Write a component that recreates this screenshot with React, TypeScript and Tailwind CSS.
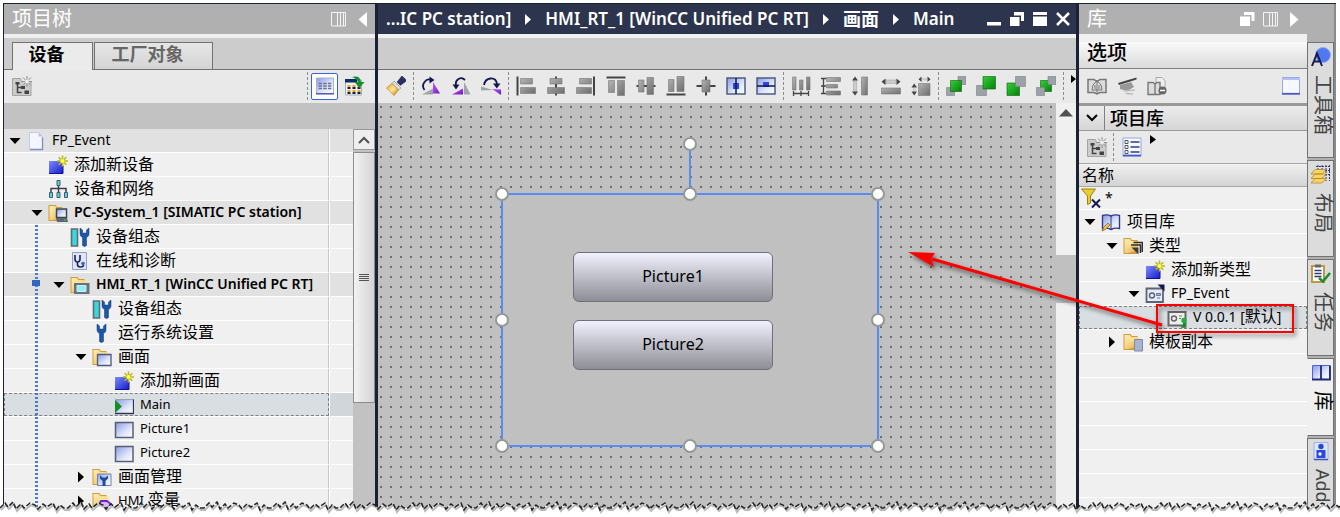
import type { ReactNode } from "react";

const LATIN = "font-['Noto_Sans','Noto_Sans_CJK_SC',sans-serif]";

/* Shared gradients for the toolbar and tree icons */
const IconDefs = () => (
  <svg className="absolute h-0 w-0" aria-hidden="true">
    <defs>
      <linearGradient id="gGrey" x1="0" y1="0" x2="1" y2="1">
        <stop offset="0" stopColor="#b4b4b4" />
        <stop offset="1" stopColor="#6e6e6e" />
      </linearGradient>
      <linearGradient id="gBlue" x1="0" y1="0" x2="1" y2="1">
        <stop offset="0" stopColor="#8b9be0" />
        <stop offset="0.6" stopColor="#dfe6fa" />
        <stop offset="1" stopColor="#ffffff" />
      </linearGradient>
      <linearGradient id="gNew" x1="0" y1="0" x2="1" y2="1">
        <stop offset="0" stopColor="#7c8cff" />
        <stop offset="1" stopColor="#1418c8" />
      </linearGradient>
      <linearGradient id="gGreen" x1="0" y1="0" x2="1" y2="1">
        <stop offset="0" stopColor="#35d035" />
        <stop offset="1" stopColor="#04800c" />
      </linearGradient>
      <linearGradient id="gFolder" x1="0" y1="0" x2="1" y2="1">
        <stop offset="0" stopColor="#fff0b8" />
        <stop offset="1" stopColor="#e8b64c" />
      </linearGradient>
      <linearGradient id="gGold" x1="0" y1="0" x2="1" y2="1">
        <stop offset="0" stopColor="#f0a020" />
        <stop offset="0.5" stopColor="#ffe890" />
        <stop offset="1" stopColor="#c87008" />
      </linearGradient>
      <linearGradient id="gPurple" x1="0" y1="0" x2="1" y2="1">
        <stop offset="0" stopColor="#c060f8" />
        <stop offset="1" stopColor="#7010d0" />
      </linearGradient>
    </defs>
  </svg>
);

const Svg = ({ children }: { children: ReactNode }) => (
  <svg width="20" height="20" viewBox="0 0 20 20" className="shrink-0" aria-hidden="true">
    {children}
  </svg>
);

/* ---------- tree icons ---------- */

const Folder = () => (
  <>
    <path d="M0.500 2h7l1.500 2h5.500v14H0.500z" fill="#d09c38" />
    <path d="M1.500 3h5.500l1.500 2h5.500v10L5 17H1.500z" fill="url(#gFolder)" />
    <path d="M5 5.500h13v4H6z" fill="#fbe6a4" opacity="0.700" />
  </>
);

const Wrench = () => (
  <path
    d="M1 1v6q0 2.500 2.500 3.500v8q2 2 4 0v-8q2.500-1 2.500-3.500V1L7.500 3v3h-4V3z"
    fill="#1c56a4"
    stroke="#123a78"
    strokeWidth="0.500"
  />
);

const Star = () => (
  <path
    d="M14.500 0.500v11M9 6h11M10.700 2.200l7.600 7.600M18.300 2.200l-7.600 7.600"
    stroke="#b8b818"
    strokeWidth="1.600"
  />
);

const icons: Record<string, ReactNode> = {
  page: (
    <>
      <path d="M3.500 1.500h9l4 4v13h-13z" fill="#f4f7ff" stroke="#c0caea" />
      <path d="M4 18.500h12.500v-12" stroke="#7d8cc8" strokeWidth="1.300" fill="none" />
      <path d="M12.500 1.500v4h4z" fill="#b8c4ec" />
    </>
  ),
  add: (
    <>
      <path d="M1 6h14v13H1z" fill="url(#gNew)" />
      <path d="M1 18.500h14v-8" stroke="#10109c" fill="none" />
      <Star />
      <circle cx="14.500" cy="6" r="2" fill="#ffff50" />
    </>
  ),
  network: (
    <>
      <path d="M3 13V9.500h15V13M10.500 6v7" stroke="#39404c" strokeWidth="1.500" fill="none" />
      <g fill="#50d8dc" stroke="#4a5868">
        <path d="M9 1.500h3v5H9zM1.500 13.500h3v5h-3zM9 13.500h3v5H9zM16.500 13.500h3v5h-3z" />
      </g>
    </>
  ),
  pc: (
    <>
      <Folder />
      <path d="M8.500 6h10v8.500h-10z" fill="url(#gBlue)" stroke="#3a4654" strokeWidth="1.500" />
      <path d="M8 15h11l1 4H9z" fill="#5a6674" />
      <path d="M16 17h2" stroke="#30d040" />
    </>
  ),
  config: (
    <>
      <path d="M1.500 2h6v17h-6z" fill="#38d8dc" stroke="#606c74" strokeWidth="1.600" />
      <g transform="translate(9 0)">
        <Wrench />
      </g>
    </>
  ),
  diag: (
    <>
      <path d="M2.500 1.500h14v17h-14z" fill="#dfe5fb" stroke="#8e9cd0" />
      <path d="M5 4v4q0 3 2.500 3T10 8V4M7.500 11v2.500q0 2.500 3 2.500t3-2" stroke="#1c2454" strokeWidth="1.600" fill="none" />
      <circle cx="13" cy="12.500" r="1.800" fill="#3c68b8" />
    </>
  ),
  hmi: (
    <>
      <Folder />
      <path d="M4 8h15.500v11H4z" fill="#627482" />
      <path d="M7 10.500h9v6H7z" fill="#8cf0f4" stroke="#dfe8ee" />
    </>
  ),
  wrench: (
    <g transform="translate(4 0)">
      <Wrench />
    </g>
  ),
  screens: (
    <>
      <Folder />
      <path d="M5.500 7.500h13.500v11H5.500z" fill="url(#gBlue)" stroke="#4c5878" strokeWidth="1.300" />
    </>
  ),
  main: (
    <>
      <path d="M1.500 4.500h18v14h-18z" fill="url(#gBlue)" stroke="#98a2b8" />
      <path d="M1 18.500h18.500v-14" stroke="#303850" strokeWidth="1.300" fill="none" />
      <path d="M1 5l7 6.500L1 18z" fill="#178c24" />
    </>
  ),
  picture: <path d="M1.500 3.500h17.500v15H1.500z" fill="url(#gBlue)" stroke="#555f75" strokeWidth="1.500" />,
  manage: (
    <>
      <Folder />
      <path d="M5.500 7h13.500v11.500H5.500z" fill="url(#gBlue)" stroke="#7080b0" />
      <path d="M8 8.500v3l2.500 2.500v5h3V14l2.500-2.500v-3l-2.500 2h-3z" fill="#1c4c9c" />
    </>
  ),
  tags: (
    <>
      <Folder />
      <path d="M5 17l4-7h6l4 3-3 4H5z" fill="#d8b8f8" stroke="#6a28b8" strokeWidth="1.800" />
    </>
  ),
  library: (
    <>
      <path d="M1.500 3.500Q6 2 10 4q4-2 8.500-.5v13Q14 15.500 10 17.500q-4-2-8.500-1z" fill="url(#gBlue)" stroke="#323c88" strokeWidth="1.400" />
      <path d="M10 4v13.500" stroke="#323c88" />
      <path d="M1 19l1.500-3.500L7 11l2 2-4.500 4.500z" fill="#f0c050" stroke="#7c5418" strokeWidth="0.700" />
    </>
  ),
  types: (
    <>
      <Folder />
      <path d="M8 9h9.500v8M10.500 6.500H19.500V16" stroke="#2c2c2c" strokeWidth="1.600" fill="none" />
      <path d="M8.500 11.500h7v7z" fill="#3c3c3c" />
    </>
  ),
  faceplate: (
    <>
      <path d="M1.500 4.500h16.500v13.500H1.500z" fill="#e8ebf4" stroke="#5c6478" strokeWidth="1.800" />
      <circle cx="7" cy="11.500" r="2.500" fill="none" stroke="#5c6478" strokeWidth="1.400" />
      <path d="M11.500 9.500h4v2h-4zM12 14h3" stroke="#6878a0" fill="#a0b0d8" />
      <path d="M12.500 0.500h7v7z" fill="#14184c" />
    </>
  ),
  version: (
    <>
      <path d="M1.500 4h17v13.500h-17z" fill="#eeeeee" stroke="#666666" strokeWidth="2" />
      <circle cx="7" cy="10.500" r="2.500" fill="none" stroke="#666666" strokeWidth="1.400" />
      <path d="M12 8h3M12 10.500h2" stroke="#777777" />
      <path d="M17 13v6" stroke="#108828" strokeWidth="2" />
      <circle cx="17" cy="12.500" r="2.700" fill="#22b03c" />
      <path d="M14 19h5.500" stroke="#108828" strokeWidth="1.500" />
    </>
  ),
  copies: (
    <>
      <Folder />
      <path d="M11.500 7.500h8v11.500h-8z" fill="#aab4d0" stroke="#7c88a8" />
    </>
  ),
};

/* ---------- trees ---------- */

type TreeItem = {
  label: ReactNode;
  icon: string;
  level: number;
  state?: "open" | "closed";
  bold?: boolean;
  shaded?: boolean;
  selected?: boolean;
  guide?: boolean;
  marker?: boolean;
  wide?: boolean;
};

const indents = ["", "pl-[22px]", "pl-[44px]", "pl-[66px]", "pl-[88px]"];

const projectItems: TreeItem[] = [
  { label: "FP_Event", icon: "page", level: 0, state: "open", shaded: true, wide: true },
  { label: "添加新设备", icon: "add", level: 1 },
  { label: "设备和网络", icon: "network", level: 1 },
  { label: "PC-System_1 [SIMATIC PC station]", icon: "pc", level: 1, state: "open", shaded: true, bold: true, wide: true },
  { label: "设备组态", icon: "config", level: 2, guide: true },
  { label: "在线和诊断", icon: "diag", level: 2, guide: true },
  { label: "HMI_RT_1 [WinCC Unified PC RT]", icon: "hmi", level: 2, state: "open", shaded: true, bold: true, wide: true, guide: true, marker: true },
  { label: "设备组态", icon: "config", level: 3, guide: true },
  { label: "运行系统设置", icon: "wrench", level: 3, guide: true },
  { label: "画面", icon: "screens", level: 3, state: "open", guide: true },
  { label: "添加新画面", icon: "add", level: 4, guide: true },
  { label: "Main", icon: "main", level: 4, selected: true, guide: true },
  { label: "Picture1", icon: "picture", level: 4, guide: true },
  { label: "Picture2", icon: "picture", level: 4, guide: true },
  { label: "画面管理", icon: "manage", level: 3, state: "closed", guide: true },
  {
    label: (
      <>
        <span className="text-[13px]">HMI</span> 变量
      </>
    ),
    icon: "tags",
    level: 3,
    state: "closed",
    guide: true,
  },
];

const libraryItems: TreeItem[] = [
  { label: "项目库", icon: "library", level: 0, state: "open" },
  { label: "类型", icon: "types", level: 1, state: "open" },
  { label: "添加新类型", icon: "add", level: 2 },
  { label: "FP_Event", icon: "faceplate", level: 2, state: "open", wide: true },
  {
    label: (
      <>
        <span className="text-sm">V 0.0.1 [</span>默认<span className="text-sm">]</span>
      </>
    ),
    icon: "version",
    level: 3,
    selected: true,
  },
  { label: "模板副本", icon: "copies", level: 1, state: "closed" },
];

const isLatin = (label: ReactNode) => typeof label === "string" && /^[\x20-\x7e]+$/.test(label);

const Expander = ({ state }: { state?: "open" | "closed" }) => (
  <svg width="12" height="12" viewBox="0 0 12 12" className="shrink-0" aria-hidden="true">
    {state === "open" && <path d="M0.500 3h11L6 9z" fill="#000" />}
    {state === "closed" && <path d="M3 0.500v11L9 6z" fill="#000" />}
  </svg>
);

const TreeRow = ({ item, className }: { item: TreeItem; className: string }) => {
  const size = isLatin(item.label) ? (item.wide ? "text-sm" : "text-[13px]") : "text-base";
  const background = item.selected
    ? "bg-[#d9dee2] outline-1 -outline-offset-1 outline-dashed outline-[#808080]"
    : item.shaded
      ? "bg-[#e1e1e1]"
      : "bg-[#f0f0f0]";
  return (
    <div
      role="treeitem"
      aria-expanded={item.state ? item.state === "open" : undefined}
      aria-selected={!!item.selected}
      className={`relative flex h-[23px] min-w-0 flex-1 items-center ${className} ${background}`}
    >
      {item.guide && (
        <span className="absolute top-0 left-[31px] h-[23px] w-[3px] bg-[repeating-linear-gradient(to_bottom,#4a7cc8_0_2px,transparent_2px_4px)]" />
      )}
      {item.marker && <span className="absolute top-[7px] left-7 h-[6px] w-2 bg-[#3068c0]" />}
      <div className={`flex items-center whitespace-nowrap ${indents[item.level]}`}>
        <Expander state={item.state} />
        <span className="mr-[6px] ml-[5px]">
          <Svg>{icons[item.icon]}</Svg>
        </span>
        <span className={`pb-[2px] leading-5 ${size} ${item.bold ? "font-semibold" : ""}`}>{item.label}</span>
      </div>
    </div>
  );
};

/* ---------- toolbar icons ---------- */

const grey = { fill: "url(#gGrey)", stroke: "#777777", strokeWidth: 0.6 };

const rotateIcons: [string, ReactNode][] = [
  [
    "向右旋转",
    <>
      <path d="M12 17.500V6l7 11.500z" fill="url(#gPurple)" />
      <path d="M1 18.500l11-6v6z" fill="#a0a4a8" />
      <path d="M3.500 14Q0.500 10 3.500 6T10 4" stroke="#14184c" strokeWidth="1.800" fill="none" />
      <path d="M8.500 0.500l5 3.500-5 3.500z" fill="#14184c" />
    </>,
  ],
  [
    "向左旋转",
    <>
      <path d="M1 18.500l11-6v6z" fill="url(#gPurple)" />
      <path d="M13 18.500V6l6.500 12.500z" fill="#a0a4a8" />
      <path d="M14 4Q11 1 7.500 3T5 10" stroke="#14184c" strokeWidth="1.800" fill="none" />
      <path d="M1.500 8.500h7L5 13.500z" fill="#14184c" />
    </>,
  ],
  [
    "翻转",
    <>
      <path d="M11 13l9 0.500v5.500z" fill="url(#gPurple)" />
      <path d="M0 10.500v4l12-.5z" fill="#a0a4a8" />
      <path d="M3 9Q4 3 9.500 2.500T16 8" stroke="#14184c" strokeWidth="1.800" fill="none" />
      <path d="M12 7.500h7.500l-3.700 5z" fill="#14184c" />
    </>,
  ],
];

const alignIcons: [string, ReactNode][] = [
  [
    "左对齐",
    <>
      <path d="M1.500 0.500v19" stroke="#444" strokeWidth="2" />
      <path d="M4.500 2.500h12v5.500h-12zM4.500 11.500h15v6h-15z" {...grey} />
    </>,
  ],
  [
    "水平居中",
    <>
      <path d="M10 0.500v19" stroke="#444" strokeWidth="2" />
      <path d="M4 2.500h12v5.500H4zM1.500 11.500h17v6h-17z" {...grey} />
    </>,
  ],
  [
    "右对齐",
    <>
      <path d="M18 0.500v19" stroke="#444" strokeWidth="2" />
      <path d="M3.500 2.500h12v5.500h-12zM0.500 11.500h15v6h-15z" {...grey} />
    </>,
  ],
  [
    "顶部对齐",
    <>
      <path d="M0.500 1.500h19" stroke="#444" strokeWidth="2" />
      <path d="M2.500 4.500h6v12h-6zM11.500 4.500h7v15h-7z" {...grey} />
    </>,
  ],
  [
    "垂直居中",
    <>
      <path d="M0.500 10h19" stroke="#444" strokeWidth="2" />
      <path d="M2.500 4h5.500v12H2.500zM11 1.500h6.500v17H11z" {...grey} />
    </>,
  ],
  [
    "底部对齐",
    <>
      <path d="M0.500 18.500h19" stroke="#444" strokeWidth="2" />
      <path d="M2.500 3.500h5.500v12H2.500zM11 0.500h7v15h-7z" {...grey} />
    </>,
  ],
  [
    "居中对齐",
    <>
      <path d="M0.500 10h19M10 0.500v19" stroke="#444" strokeWidth="2" />
      <path d="M6 4h8v12H6z" {...grey} />
    </>,
  ],
  [
    "在画面中水平居中",
    <>
      <path d="M1 2h18v16H1z" fill="url(#gBlue)" stroke="#4c5c84" strokeWidth="1.500" />
      <path d="M7 7h6v6H7z" fill="#2848e8" />
      <path d="M10 2v16" stroke="#101840" strokeWidth="1.500" />
    </>,
  ],
  [
    "在画面中垂直居中",
    <>
      <path d="M1 2h18v16H1z" fill="url(#gBlue)" stroke="#4c5c84" strokeWidth="1.500" />
      <path d="M7 6h6v5H7z" fill="#2848e8" />
      <path d="M1 10h18" stroke="#101840" strokeWidth="1.500" />
    </>,
  ],
];

const spaceIcons: [string, ReactNode][] = [
  [
    "水平等距",
    <>
      <path d="M1.500 1h3.500v13H1.500zM8.500 4h3.500v10H8.500zM15.500 1h3.500v13h-3.500z" {...grey} />
      <path d="M2 17.500h16M2.500 15v5M10 15v5M17.500 15v5" stroke="#444" strokeWidth="1.300" />
    </>,
  ],
  [
    "垂直等距",
    <>
      <path d="M5.500 1.500h14v4h-14zM5.500 8.500h11v3.500h-11zM5.500 15h14v4h-14z" {...grey} />
      <path d="M2.500 2v16M0 2.500h5M0 10h5M0 17.500h5" stroke="#444" strokeWidth="1.300" />
    </>,
  ],
  [
    "相同高度",
    <>
      <path d="M10.500 1h6v18h-6z" {...grey} />
      <path d="M2.500 5h3v10h-3z" fill="#ccc" stroke="#999" strokeWidth="0.500" />
      <path d="M1 4.500L4 0.500l3 4zM1 15.500l3 4 3-4z" fill="#444" />
    </>,
  ],
  [
    "相同宽度",
    <>
      <path d="M0.500 12h19v6H0.500z" {...grey} />
      <path d="M5 4h10v3.500H5z" fill="#ccc" stroke="#999" strokeWidth="0.500" />
      <path d="M4.500 2.500v6.500L0.500 5.700zM15.500 2.500v6.500l4-3.300z" fill="#444" />
    </>,
  ],
  [
    "相同大小",
    <>
      <path d="M7.500 7.500h11.500v12H7.500z" {...grey} />
      <path d="M10.500 0.500v5.500L7.500 3.200zM16.500 0.500v5.500l3-2.800zM0.500 11.500h5.500l-2.800-4zM0.500 15.500h5.500l-2.800 4z" fill="#444" />
      <path d="M11 2h5v2.500h-5zM2 12h2.500v3H2z" fill="#ccc" />
    </>,
  ],
];

const greyBox = { fill: "#9ca2a8", stroke: "#7c8288", strokeWidth: 0.6 };
const greenBox = { fill: "url(#gGreen)", stroke: "#08600c", strokeWidth: 0.6 };

const layerIcons: [string, ReactNode][] = [
  [
    "上移一层",
    <>
      <path d="M12 0.500h8v8h-8zM0.500 11.500h8v8h-8z" {...greyBox} />
      <path d="M4.500 4.500h11v11h-11z" {...greenBox} />
    </>,
  ],
  [
    "置于顶层",
    <>
      <path d="M0.500 9.500h10v10H0.500z" {...greyBox} />
      <path d="M7 0.500h12.500V13H7z" {...greenBox} />
    </>,
  ],
  [
    "置于底层",
    <>
      <path d="M1 7h12.500v12.500H1z" {...greenBox} />
      <path d="M9.500 0.500h10v10h-10z" {...greyBox} />
    </>,
  ],
  [
    "下移一层",
    <>
      <path d="M4.500 4.500h11v11h-11z" {...greenBox} />
      <path d="M12 0.500h8v8h-8zM0.500 11.500h8v8h-8z" {...greyBox} />
    </>,
  ],
];

const ToolGroup = ({ tools }: { tools: [string, ReactNode][] }) => (
  <div className="flex">
    {tools.map(([name, icon]) => (
      <button key={name} type="button" aria-label={name} className="flex h-7 w-[30px] items-center justify-center">
        <Svg>{icon}</Svg>
      </button>
    ))}
  </div>
);

const Separator = () => <div className="mx-[2px] h-7 border-l border-dashed border-[#8c8c8c]" />;

const newFolderIcon = (
  <>
    <path d="M0.500 2.500h8l1 3h9.500v14H0.500z" fill="#cccccc" stroke="#a4a4a4" />
    <path d="M5.500 8v8.500h4M5.500 11.500h4" stroke="#444" strokeWidth="1.500" fill="none" />
    <path d="M3.500 6h4v2.500h-4zM9 10h4v3H9zM12.500 14.500h4.500v3.500h-4.500z" fill="#444" />
    <path d="M15 0v11M9.500 5.500H20M11 1.500l8 8M19 1.500l-8 8" stroke="#909090" />
    <circle cx="15" cy="5.500" r="2" fill="#eee" />
  </>
);

const columnsIcon = (
  <svg width="15" height="15" viewBox="0 0 15 15" aria-hidden="true">
    <path d="M0.500 0.500h14v13.500H0.500zM6.500 0v14M9.500 0v14M12.500 0v14" fill="none" stroke="#f4f4f4" />
  </svg>
);

/* ---------- panels ---------- */

const ProjectTree = () => (
  <aside className="flex w-[371px] shrink-0 flex-col bg-[#c2c2c2]">
    <header className="flex h-[30px] shrink-0 items-center gap-3 bg-[#b0b0b0] pr-2 pl-2">
      <h2 className="flex-1 text-xl leading-[30px] text-white">项目树</h2>
      <button type="button" aria-label="列">
        {columnsIcon}
      </button>
      <button type="button" aria-label="折叠">
        <svg width="9" height="15" viewBox="0 0 9 15">
          <path d="M9 0v15L0.500 7.500z" fill="#fff" />
        </svg>
      </button>
    </header>
    <div className="h-1 shrink-0 bg-[#f0f0f0]" />
    <div role="tablist" className="flex h-8 shrink-0 gap-px border-b border-[#727272] bg-[#cccccc] pt-1 pl-2">
      <button
        role="tab"
        type="button"
        aria-selected="true"
        className="-mb-px w-[81px] border border-b-0 border-[#727272] bg-[#ebebeb] pr-3 pb-[6px] text-lg leading-5 font-bold"
      >
        设备
      </button>
      <button
        role="tab"
        type="button"
        aria-selected="false"
        className="w-[119px] border border-b-0 border-[#727272] bg-linear-to-b from-[#e6e6e6] to-[#d4d4d4] pr-3 pb-[5px] text-lg leading-5 font-bold text-[#666]"
      >
        工厂对象
      </button>
    </div>
    <div className="flex h-[33px] shrink-0 items-center bg-[#e9e9e9] pr-2 pb-px pl-2">
      <button type="button" aria-label="新建组" className="mr-auto">
        <Svg>{newFolderIcon}</Svg>
      </button>
      <Separator />
      <button
        type="button"
        aria-label="列表视图"
        className="ml-px flex h-[27px] w-[27px] items-center justify-center rounded-xs border border-[#3a64d0] bg-white"
      >
        <Svg>
          <path d="M1.500 2h17v15.500h-17z" fill="url(#gBlue)" stroke="#a8b0d8" />
          <path d="M1 17.800h18" stroke="#5058c0" strokeWidth="1.500" />
          <path d="M3.500 7.500h13M3.500 10h13M3.500 12.500h13" stroke="#6a7490" strokeWidth="1.400" strokeDasharray="3.500 1.200" />
        </Svg>
      </button>
      <button type="button" aria-label="导出" className="ml-1 pr-[2px] pl-[3px]">
        <Svg>
          <path d="M0.500 4h16v15h-16z" fill="#f2f0e4" stroke="#9cb0c0" />
          <path d="M0 3h12v3.500H0z" fill="#0c2c6c" />
          <path d="M2.500 10h13M2.500 15h13" stroke="#e0a840" strokeWidth="2" strokeDasharray="3 2" />
          <path d="M2.500 12h13M2.500 17h13" stroke="#1c1c3c" strokeWidth="2" strokeDasharray="3 2" />
          <path d="M7 1q8-2 9 5h3.500L14.500 12 9.500 6h3.500q-1-3-6-5z" fill="#189030" />
        </Svg>
      </button>
    </div>
    <div className="mt-[26px] flex min-h-0 flex-1">
      <div role="tree" aria-label="项目树" className="flex-1 overflow-hidden bg-[#f0f0f0]">
        {projectItems.map((item, i) => (
          <div key={i} className="flex border-b border-white">
            <TreeRow item={item} className="border-r border-[#c8c8c8] pl-[5px]" />
            <div
              className={`h-[23px] w-6 border-l border-white ${
                item.selected ? "bg-[#d1d6da]" : item.shaded ? "bg-[#e1e1e1]" : "bg-[#f0f0f0]"
              }`}
            />
          </div>
        ))}
      </div>
      <div className="flex w-[22px] shrink-0 flex-col gap-[2px]">
        <button
          type="button"
          aria-label="向上滚动"
          className="flex h-[21px] w-full items-center justify-center border border-[#9a9a9a] bg-[#eeeeee]"
        >
          <svg width="12" height="8" viewBox="0 0 12 8">
            <path d="M1 7l5-5 5 5" fill="none" stroke="#505050" strokeWidth="2" />
          </svg>
        </button>
        <div className="flex h-[251px] flex-col items-center justify-center gap-px border border-[#8c8c8c] bg-linear-to-r from-[#f2f2f2] to-[#d4d4d4]">
          <span className="h-px w-[10px] bg-[#555]" />
          <span className="h-px w-[10px] bg-[#555]" />
          <span className="h-px w-[10px] bg-[#555]" />
          <span className="h-px w-[10px] bg-[#555]" />
        </div>
      </div>
    </div>
  </aside>
);

const Crumb = () => (
  <svg width="6" height="11" viewBox="0 0 6 11" aria-hidden="true">
    <path d="M0 0v11l6-5.500z" fill="#fff" />
  </svg>
);

const windowIcons: [string, ReactNode][] = [
  ["最小化", <path d="M0 10h14v3.500H0z" fill="#fff" />],
  [
    "还原",
    <>
      <path d="M4 0h10v9h-3V3.500H4z" fill="#fff" />
      <path d="M0 5h9.500v9H0z" fill="#fff" />
    </>,
  ],
  ["最大化", <path d="M0 0h14v3H0zM0 4.500h14V14H0z" fill="#fff" />],
  ["关闭", <path d="M1 1l12 12M13 1L1 13" stroke="#fff" strokeWidth="2.500" />],
];

const handles = [
  "left-[-8px] top-[-8px]",
  "left-[180px] top-[-8px]",
  "right-[-8px] top-[-8px]",
  "left-[-8px] top-[118px]",
  "right-[-8px] top-[118px]",
  "left-[-8px] bottom-[-8px]",
  "left-[180px] bottom-[-8px]",
  "right-[-8px] bottom-[-8px]",
  "left-[180px] top-[-58px]",
];

const Editor = () => (
  <main className="flex min-w-0 flex-1 flex-col border-x-[3px] border-[#1b2135]">
    <header className="flex h-[30px] shrink-0 items-center bg-[#2d344d] pr-[6px] pl-2 text-[17px] leading-[30px] font-semibold text-white">
      <nav aria-label="路径" className="flex flex-1 items-center gap-[14px] whitespace-nowrap">
        <span>...IC PC station]</span>
        <Crumb />
        <span>HMI_RT_1 [WinCC Unified PC RT]</span>
        <Crumb />
        <span className="text-lg leading-[30px]">画面</span>
        <Crumb />
        <span>Main</span>
      </nav>
      <div className="flex gap-[9px]">
        {windowIcons.map(([name, icon]) => (
          <button key={name} type="button" aria-label={name}>
            <svg width="14" height="14" viewBox="0 0 14 14">
              {icon}
            </svg>
          </button>
        ))}
      </div>
    </header>
    <div className="h-1 shrink-0 bg-[#f0f0f0]" />
    <div className="h-8 shrink-0 border-b border-[#727272] bg-[#cccccc]" />
    <div role="toolbar" aria-label="编辑" className="flex h-[33px] shrink-0 items-center overflow-hidden bg-[#e9e9e9] pb-px pl-[3px]">
      <ToolGroup
        tools={[
          [
            "格式刷",
            <>
              <path d="M12 6l4-5 3.500 3.500-5 4z" fill="#2c3060" stroke="#2c3060" strokeWidth="2" />
              <path d="M8 5l7 7-2.500 2L6 7.500z" fill="#dcdcdc" stroke="#777" strokeWidth="0.500" />
              <path d="M6 7.500l6.500 6.500L8 19.500 0.500 12z" fill="url(#gGold)" stroke="#a06010" strokeWidth="0.500" />
            </>,
          ],
        ]}
      />
      <Separator />
      <ToolGroup tools={rotateIcons} />
      <Separator />
      <ToolGroup tools={alignIcons} />
      <Separator />
      <ToolGroup tools={spaceIcons} />
      <Separator />
      <ToolGroup tools={layerIcons} />
      <Separator />
      <button type="button" aria-label="更多" className="ml-auto self-start pt-[5px]">
        <svg width="5" height="8" viewBox="0 0 5 8">
          <path d="M0 0v8l5-4z" fill="#000" />
        </svg>
      </button>
    </div>
    <div className="flex min-h-0 flex-1">
      <div className="relative flex-1 overflow-hidden bg-[#c0c0c0] bg-[radial-gradient(circle_at_3px_4px,#6e6e6e_0_1px,transparent_1px)] bg-size-[10px_10px]">
        <div className="absolute top-[90px] left-[123px] flex h-[254px] w-[378px] flex-col gap-[18px] border-2 border-[#5a8df0] bg-[#c0c0c0] pt-[57px] pl-[70px]">
          {["Picture1", "Picture2"].map((name) => (
            <button
              key={name}
              type="button"
              className="h-[50px] w-[200px] shrink-0 rounded-md border border-[#707078] bg-linear-to-b from-[#f2f2ff] to-[#8e8e96] pb-[2px] text-base"
            >
              {name}
            </button>
          ))}
          <span className="absolute top-[-46px] left-[186px] h-11 w-[2px] bg-[#5a8df0]" />
          {handles.map((pos) => (
            <span key={pos} className={`absolute size-[14px] rounded-full border-2 border-[#979797] bg-white ${pos}`} />
          ))}
        </div>
      </div>
      <div className="flex w-5 shrink-0 flex-col items-center bg-[#f0f0f0]">
        <svg width="14" height="8" viewBox="0 0 14 8" className="mt-[6px] shrink-0" aria-hidden="true">
          <path d="M0 7.500h14L7 0z" fill="#505050" />
        </svg>
        <div className="mt-[138px] h-12 w-full shrink-0 bg-[#c0c0c0]" />
      </div>
    </div>
  </main>
);

const Library = () => (
  <aside className="flex w-[228px] shrink-0 flex-col bg-[#f0f0f0]">
    <header className="flex h-[30px] shrink-0 items-center gap-2 bg-[#b0b0b0] pr-2 pl-2">
      <h2 className="flex-1 text-xl leading-[30px] text-white">库</h2>
      <button type="button" aria-label="浮动">
        <svg width="15" height="14" viewBox="0 0 15 14">
          <path d="M4 0h10.500v9h-3V3H4zM0 4.500h10V14H0z" fill="#fff" />
        </svg>
      </button>
      <button type="button" aria-label="列">
        {columnsIcon}
      </button>
      <button type="button" aria-label="展开" className="ml-1">
        <svg width="9" height="15" viewBox="0 0 9 15">
          <path d="M0 0v15l8.500-7.500z" fill="#fff" />
        </svg>
      </button>
    </header>
    <h3 className="mt-2 h-[27px] shrink-0 border-b border-[#808080] bg-linear-to-b from-[#fafafa] to-[#dadada] pl-2 text-xl leading-[22px] font-medium">
      选项
    </h3>
    <div className="flex h-[34px] shrink-0 items-center gap-[10px] bg-[#e9e9e9] pr-[6px] pl-2">
      <button type="button" aria-label="打开库">
        <Svg>
          <path d="M1 3.500h6l3 2 3-2h6v13h-6l-3 1.500-3-1.500H1z" fill="#dcdcdc" stroke="#777" strokeWidth="1.500" />
          <path d="M10 4.500L6 9l-1 5h10l-1-5zM10 4v13M8 9v4M12 9v4" stroke="#777" fill="none" />
        </Svg>
      </button>
      <button type="button" aria-label="清理库">
        <Svg>
          <path d="M1 7L19.500 1.500v2L2 9z" fill="#444" />
          <path d="M3 9l11-3 3 5-7 4-7-2z" fill="#999" />
          <path d="M7 15l11-1M9 17.500l7 .5" stroke="#bbb" strokeWidth="1.500" />
        </Svg>
      </button>
      <button type="button" aria-label="更新库" className="mr-auto">
        <Svg>
          <path d="M9 1.500h6l3 3v9H9z" fill="#eee" stroke="#aaa" />
          <path d="M1 6.500h5l2 1.500 2-1.500h3v12H1zM8 8v10" fill="#ddd" stroke="#777" strokeWidth="1.400" />
          <circle cx="15.500" cy="14.500" r="4" fill="#666" />
          <path d="M13 14.500h5" stroke="#fff" strokeWidth="1.500" />
        </Svg>
      </button>
      <button type="button" aria-label="库视图">
        <Svg>
          <path d="M1.500 1.500h17v16h-17z" fill="#f4f8ff" stroke="#98a8e8" />
          <path d="M1 3h18" stroke="#b4c0f0" strokeWidth="2" />
          <path d="M1 17.800h18" stroke="#4858c8" strokeWidth="1.800" />
        </Svg>
      </button>
    </div>
    <div className="flex h-7 shrink-0 items-center border-t-[3px] border-b border-t-[#9a9a9a] border-b-[#9a9a9a] bg-linear-to-b from-[#ececec] to-[#d6d6d6]">
      <button type="button" aria-label="折叠项目库" className="flex h-full w-[26px] items-center justify-center border-r border-[#808080]">
        <svg width="12" height="8" viewBox="0 0 12 8">
          <path d="M1 1l5 5 5-5" fill="none" stroke="#000" strokeWidth="2" />
        </svg>
      </button>
      <h3 className="pl-[5px] text-lg leading-6 font-medium">项目库</h3>
    </div>
    <div className="flex h-8 shrink-0 items-center bg-[#e9e9e9] pb-px pl-2">
      <button type="button" aria-label="新建文件夹" className="mr-1">
        <Svg>{newFolderIcon}</Svg>
      </button>
      <Separator />
      <button type="button" aria-label="详细视图" className="ml-[6px]">
        <Svg>
          <path d="M1 1h18v18H1z" fill="#f4f8ff" stroke="#98a8e8" />
          <path d="M1 18.500h18" stroke="#4858c8" strokeWidth="1.800" />
          <path d="M8.500 5h9M8.500 10h9M8.500 15h9" stroke="#303c80" strokeWidth="1.500" />
          <path d="M3 3.500h3v3H3zM3 8.500h3v3H3zM3 13.500h3v3H3z" fill="#fff" stroke="#555" />
        </Svg>
      </button>
      <svg width="6" height="9" viewBox="0 0 6 9" className="mt-1 ml-2 self-start" aria-hidden="true">
        <path d="M0 0v9l6-4.500z" fill="#000" />
      </svg>
    </div>
    <div className="h-6 shrink-0 border-y border-[#a8a8a8] bg-linear-to-b from-[#f0f0f0] to-[#d4d4d4] pl-[3px] text-base leading-[22px]">
      名称
    </div>
    <label className="flex h-[23px] shrink-0 items-center gap-1 border-b border-white pl-[2px]">
      <Svg>
        <path d="M0.500 1h14L9.500 8v7l-3 1.500V8z" fill="#e8cc30" stroke="#9c8010" />
        <path d="M11 11.500l8 8M19 11.500l-8 8" stroke="#141850" strokeWidth="2" />
      </Svg>
      <input aria-label="筛选" defaultValue="*" className="h-5 min-w-0 flex-1 bg-transparent text-sm outline-none" />
    </label>
    <div role="tree" aria-label="项目库" className="min-h-0 flex-1 overflow-hidden">
      {libraryItems.map((item, i) => (
        <div key={i} className="flex border-b border-white">
          <TreeRow item={item} className="pl-[5px]" />
        </div>
      ))}
      {[...Array(8)].map((_, i) => (
        <div key={i} className="h-6 border-b border-white" />
      ))}
    </div>
  </aside>
);

type TaskTab = { label: string; className: string; icon: ReactNode };

const taskTabs: TaskTab[] = [
  {
    label: "工具箱",
    className: "h-[116px] bg-[#dcdcdc] pt-1 text-xl text-[#444]",
    icon: (
      <>
        <circle cx="12" cy="8" r="7.500" fill="#5078f0" stroke="#90a8f8" />
        <path d="M1 19L6 6.500 11 19M3 14.500h6" fill="none" stroke="#181c50" strokeWidth="2" />
      </>
    ),
  },
  {
    label: "布局",
    className: "h-[97px] bg-[#dcdcdc] pt-1 text-xl text-[#444]",
    icon: (
      <>
        <path d="M5 1.500h14M5 5.500h14M5 9.500h14M7 0v16M11 0v16M15 0v16M18.500 0v16" stroke="#303870" strokeDasharray="2 1" />
        <path d="M4 4.500h11l-4 4.500H0zM4 9h11l-4 4.500H0zM4 13.500h11L11 18H0z" fill="#f8d468" stroke="#b88820" strokeWidth="0.800" />
      </>
    ),
  },
  {
    label: "任务",
    className: "h-[97px] bg-[#dcdcdc] pt-1 text-xl text-[#444]",
    icon: (
      <>
        <path d="M1 2h12v16H1z" fill="#fff" stroke="#c09840" strokeWidth="2" />
        <path d="M4 0.500h6v3H4z" fill="#666" />
        <path d="M3.500 6.500h7M3.500 9.500h7M3.500 12.500h7" stroke="#303870" strokeWidth="1.500" />
        <path d="M8 14l4 3.500L19 9" fill="none" stroke="#189030" strokeWidth="2.500" />
      </>
    ),
  },
  {
    label: "库",
    className: "h-[78px] border-l-[#f0f0f0] bg-[#f0f0f0] pt-1 text-xl",
    icon: (
      <>
        <path d="M1.500 2.500h17v14h-17z" fill="url(#gBlue)" stroke="#5060d8" />
        <path d="M1 16.500h18v-14M10 2.500v15" stroke="#202878" strokeWidth="1.800" fill="none" />
      </>
    ),
  },
  {
    label: "Add",
    className: "h-[110px] bg-[#dcdcdc] pt-[2px] text-lg text-[#444]",
    icon: (
      <>
        <path d="M3 1.500h14v17H3z" fill="#dfe5ff" stroke="#a0b0f0" />
        <path d="M3 18.500h14" stroke="#4050c0" strokeWidth="1.500" />
        <circle cx="10" cy="5.500" r="2.700" fill="#2848c8" />
        <path d="M5.500 9h9v8h-9z" fill="#2848e0" />
        <circle cx="9" cy="13" r="1.700" fill="#fff" />
      </>
    ),
  },
];

const TaskCards = () => (
  <div role="tablist" aria-orientation="vertical" className="flex w-[29px] shrink-0 flex-col gap-[2px] border-r-2 border-[#8a8a8a] bg-[#b0b0b0] pt-[38px]">
    {taskTabs.map((tab) => (
      <button
        key={tab.label}
        role="tab"
        type="button"
        aria-selected={tab.label === "库"}
        className={`flex shrink-0 flex-col items-center gap-2 border border-[#727272] ${tab.className}`}
      >
        <Svg>{tab.icon}</Svg>
        <span className="ml-1 leading-5 [text-orientation:sideways] [writing-mode:vertical-rl]">{tab.label}</span>
      </button>
    ))}
  </div>
);

/* Torn-paper edge along the bottom of the window */
const TornEdge = () => {
  const teeth = [
    [0, 6], [5, 1], [8, 5], [13, 0], [16, 7], [21, 2], [24, 6], [30, 1],
    [35, 3], [38, 7], [43, 2], [47, 5], [53, 1], [56, 8], [60, 3], [64, 6],
  ];
  const points: string[] = [];
  for (let x = 0; x < 2720; x += 68) {
    teeth.forEach(([dx, y]) => points.push(`${x + dx},${y + 1}`));
  }
  const line = points.join(" ");
  return (
    <svg width="100%" height="16" className="pointer-events-none absolute bottom-0 left-0" aria-hidden="true">
      <polygon points={`0,17 ${line} 2720,17`} fill="#fff" />
      <polyline points={line} fill="none" stroke="#bbb" strokeWidth="2" transform="translate(1 2)" />
      <polyline points={line} fill="none" stroke="#222" strokeWidth="1.500" strokeDasharray="5 2" />
    </svg>
  );
};

const Callout = () => (
  <svg
    width="400"
    height="100"
    viewBox="0 0 400 100"
    className="pointer-events-none absolute top-[242px] right-[34px] drop-shadow-[2px_3px_2px_rgba(0,0,0,0.5)]"
    aria-hidden="true"
  >
    <path d="M26 17L256 83" stroke="#f00" strokeWidth="3" />
    <path d="M2 10l27 1-4 6 3 8z" fill="#f00" />
    <path d="M251 63h136v27H251z" fill="none" stroke="#f00" strokeWidth="2" />
  </svg>
);

const App = () => {
  return (
    <div className={`relative h-screen overflow-hidden bg-white pt-[3px] pr-1 pl-[3px] text-black ${LATIN}`}>
      <IconDefs />
      <div className="flex h-full overflow-hidden border-t border-l border-[#1b2135]">
        <ProjectTree />
        <Editor />
        <Library />
        <TaskCards />
      </div>
      <Callout />
      <TornEdge />
    </div>
  );
};

export default App;
